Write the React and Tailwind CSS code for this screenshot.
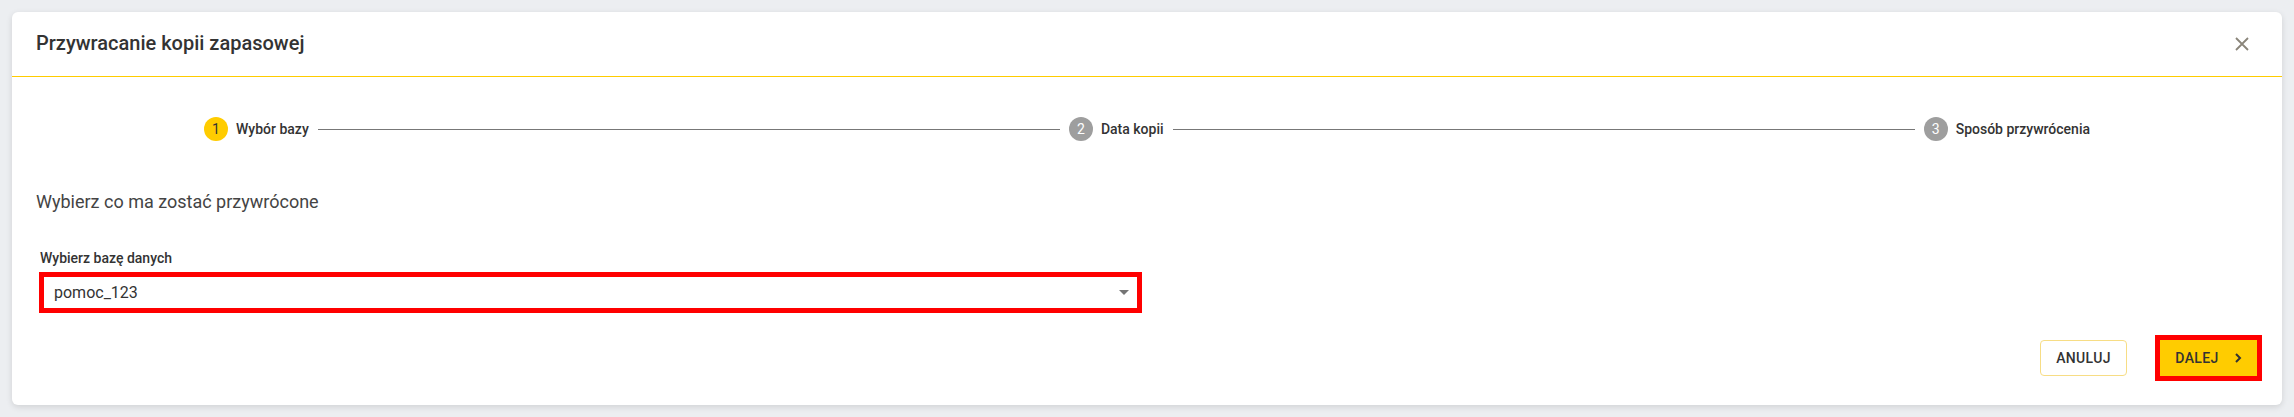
import React from 'react'

const Step = ({ n, label, active }) => (
  <div className="flex items-center shrink-0">
    <div
      className={`w-6 h-6 rounded-full flex items-center justify-center text-[14px] ${
        active ? 'bg-[#ffcc00] text-[#333]' : 'bg-[#9e9e9e] text-white'
      }`}
    >
      {n}
    </div>
    <span className="ml-2 text-[14px] font-medium text-[#333]">{label}</span>
  </div>
)

const Line = () => <div className="flex-1 h-px bg-[#777] mx-[9px]" />

const App = () => {
  return (
    <div className="w-full h-[417px] bg-[#eceef1] p-3" style={{ fontFamily: 'Roboto, "Noto Sans", sans-serif' }}>
      <div className="w-[2270px] h-[393px] bg-white rounded-md shadow-[0_2px_6px_rgba(0,0,0,0.12)] flex flex-col">
        <header className="h-[65px] shrink-0 flex items-center justify-between pl-6 pr-[33px] border-b border-[#ffcc00]">
          <h1 className="text-[20px] font-medium text-[#333] -mt-0.5">Przywracanie kopii zapasowej</h1>
          <button className="text-[#8a857a]">
            <svg width="14" height="14" viewBox="0 0 14 14" fill="none" stroke="currentColor" strokeWidth="1.8">
              <path d="M1 1L13 13M13 1L1 13" />
            </svg>
          </button>
        </header>

        <div className="flex-1 flex flex-col px-6 pb-6">
          <div className="flex items-center px-[168px] mt-10">
            <Step n="1" label="Wybór bazy" active />
            <Line />
            <Step n="2" label="Data kopii" />
            <Line />
            <Step n="3" label="Sposób przywrócenia" />
          </div>

          <p className="mt-[49px] text-[18px] leading-6 text-[#444]">Wybierz co ma zostać przywrócone</p>

          <label className="mt-9 ml-1 text-[14px] leading-4 font-medium text-[#333]">Wybierz bazę danych</label>
          <div className="mt-1.5 ml-[3px] w-[1103px] h-[41px] border-[5px] border-[#ff0000] flex items-center justify-between pl-[10px] pr-[8px]">
            <span className="text-[16px] text-[#333]">pomoc_123</span>
            <svg width="10" height="5" viewBox="0 0 10 5" className="text-[#757575]">
              <path d="M0 0L10 0L5 5Z" fill="currentColor" />
            </svg>
          </div>

          <div className="mt-auto flex justify-end items-center">
            <button className="w-[87px] h-9 rounded border border-[#f7dd85] text-[14px] font-medium tracking-wide text-[#333]">
              ANULUJ
            </button>
            <div className="ml-[28px] border-[5px] border-[#ff0000] -mr-[4px]">
              <button className="w-[97px] h-9 bg-[#ffcc00] flex items-center justify-center gap-4 text-[14px] font-medium tracking-wide text-[#333]">
                DALEJ
                <svg width="7" height="10" viewBox="0 0 7 10" fill="none" stroke="currentColor" strokeWidth="2">
                  <path d="M1 1L5 5L1 9" />
                </svg>
              </button>
            </div>
          </div>
        </div>
      </div>
    </div>
  )
}

export default App
